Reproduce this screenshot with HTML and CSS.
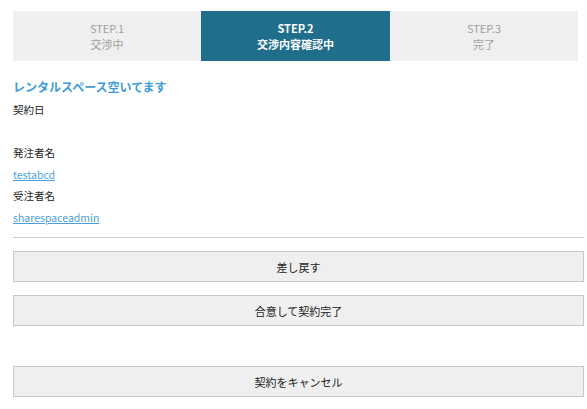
FILE: index.html
```html
<!DOCTYPE html>
<html lang="ja">
<head>
<meta charset="utf-8">
<title>契約</title>
<link rel="stylesheet" href="styles.css">
</head>
<body>
<div class="page">
  <div class="steps">
    <div class="step">
      <span class="step-num">STEP.1</span>
      <span class="step-label">交渉中</span>
    </div>
    <div class="step step-active">
      <span class="step-num">STEP.2</span>
      <span class="step-label">交渉内容確認中</span>
    </div>
    <div class="step">
      <span class="step-num">STEP.3</span>
      <span class="step-label">完了</span>
    </div>
  </div>

  <h2 class="title">レンタルスペース空いてます</h2>
  <div class="fields">
    <p class="line">契約日</p>
    <p class="line"></p>
    <p class="line">発注者名</p>
    <p class="line"><a href="#" class="link">testabcd</a></p>
    <p class="line">受注者名</p>
    <p class="line"><a href="#" class="link">sharespaceadmin</a></p>
  </div>
  <hr class="divider">
  <div class="actions">
    <button class="btn">差し戻す</button>
    <button class="btn">合意して契約完了</button>
    <button class="btn btn-cancel">契約をキャンセル</button>
  </div>
</div>
</body>
</html>
```

FILE: styles.css
```css
html, body {
  margin: 0;
  padding: 0;
  background: #ffffff;
}
body {
  font-family: "Noto Sans CJK JP", "Noto Sans", sans-serif;
  font-size: 11px;
  color: #222222;
}
.page {
  width: 571px;
  padding: 11px 0 0 13px;
}
.steps {
  display: grid;
  grid-template-columns: 188px 189px 188px;
  width: 565px;
}
.step {
  height: 50px;
  background: #efefef;
  color: #a0a0a0;
  display: flex;
  flex-direction: column;
  align-items: center;
  justify-content: center;
  line-height: 16px;
  font-size: 11px;
}
.step-active {
  background: #1f6e8c;
  color: #ffffff;
  font-weight: bold;
}
.title {
  margin: 17px 0 3px;
  font-size: 12px;
  line-height: 18px;
  font-weight: bold;
  color: #3f9bd8;
}
.fields {
  display: flex;
  flex-direction: column;
}
.line {
  margin: 0;
  height: 21.5px;
  line-height: 21.5px;
  font-size: 10.5px;
}
.link {
  color: #4a9fdc;
  text-decoration: underline;
}
.divider {
  margin: 9px 0 0;
  border: 0;
  border-top: 1px solid #cccccc;
  height: 0;
}
.actions {
  display: flex;
  flex-direction: column;
  gap: 13px;
  padding-top: 13px;
}
.btn {
  height: 31px;
  width: 100%;
  background: #efefef;
  border: 1px solid #c8c8c8;
  font-family: "Noto Sans CJK JP", "Noto Sans", sans-serif;
  font-size: 11px;
  color: #222222;
  padding: 0;
}
.btn-cancel {
  margin-top: 27px;
}
```
